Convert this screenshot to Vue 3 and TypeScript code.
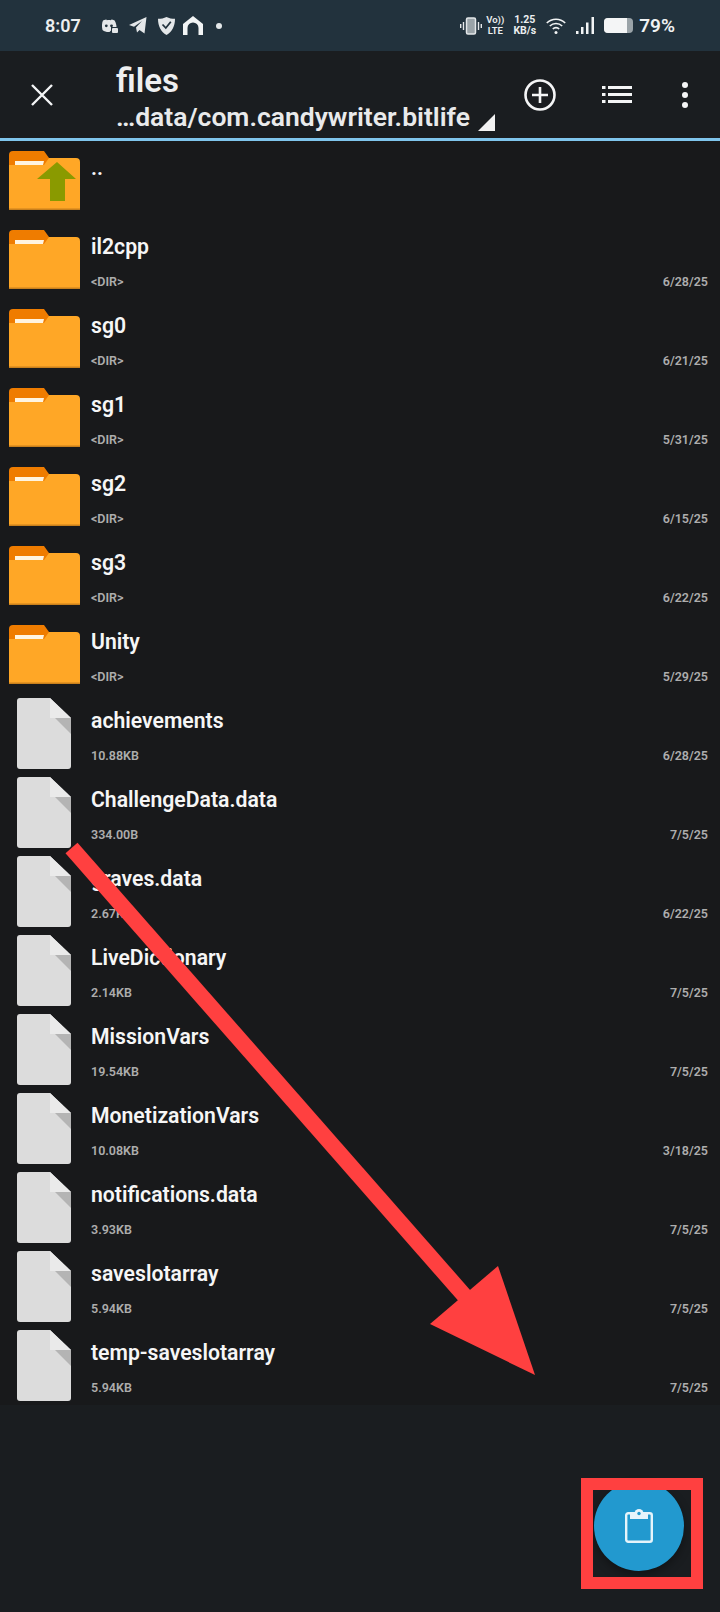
<script setup lang="ts">
interface Entry {
  name: string
  sub?: string
  date?: string
  kind: 'up' | 'dir' | 'file'
}

const dirs: [string, string][] = [
  ['il2cpp', '6/28/25'],
  ['sg0', '6/21/25'],
  ['sg1', '5/31/25'],
  ['sg2', '6/15/25'],
  ['sg3', '6/22/25'],
  ['Unity', '5/29/25'],
]

const files: [string, string, string][] = [
  ['achievements', '10.88KB', '6/28/25'],
  ['ChallengeData.data', '334.00B', '7/5/25'],
  ['graves.data', '2.67KB', '6/22/25'],
  ['LiveDictionary', '2.14KB', '7/5/25'],
  ['MissionVars', '19.54KB', '7/5/25'],
  ['MonetizationVars', '10.08KB', '3/18/25'],
  ['notifications.data', '3.93KB', '7/5/25'],
  ['saveslotarray', '5.94KB', '7/5/25'],
  ['temp-saveslotarray', '5.94KB', '7/5/25'],
]

const entries: Entry[] = [
  { name: '..', kind: 'up' },
  ...dirs.map(([name, date]): Entry => ({ name, sub: '<DIR>', date, kind: 'dir' })),
  ...files.map(([name, sub, date]): Entry => ({ name, sub, date, kind: 'file' })),
]
</script>

<template>
  <div class="screen">
    <header class="status">
      <span class="time">8:07</span>
      <svg class="st-icon discord" viewBox="0 0 18 14" width="18" height="14">
        <path fill="#e4e7e9" d="M3 1.5C5 .5 6 .4 6.4.4l.4.8c1.4-.2 2.8-.2 4.2 0l.4-.8c.9.1 2 .5 3.2 1.100C16 4 16.600 6.500 16.500 8h-5.500v3.500L9.500 13c-2.500.2-5-.3-7-2C1.700 8 1.800 4 3 1.500Z" />
        <circle cx="6.300" cy="6.800" r="1.400" fill="#22323d" />
        <circle cx="11.500" cy="6.800" r="1.400" fill="#22323d" />
        <rect x="12" y="9" width="6" height="5" rx="1" fill="#e4e7e9" />
      </svg>
      <svg class="st-icon telegram" viewBox="0 0 18 17" width="18" height="17">
        <path fill="#e4e7e9" d="M0 8 17.500 0 15.500 16.500 10.500 13 8 15.500 7 10.500 13 4 5 9.800Z" />
      </svg>
      <svg class="st-icon shield" viewBox="0 0 17 18" width="17" height="18">
        <path fill="#e4e7e9" d="M8.500 0C11 1.300 14 1.800 17 1.800 17 9 14 15 8.500 18 3 15 0 9 0 1.800 3 1.800 6 1.300 8.500 0Z" />
        <path fill="none" stroke="#22323d" stroke-width="1.800" d="M4.500 7.500 7.800 11 12.800 4.800" />
      </svg>
      <svg class="st-icon home" viewBox="0 0 20 19" width="20" height="19">
        <path fill="#f2f4f5" d="M10 0 20 8v11h-4.500v-7a5.500 5.500 0 0 0-11 0v7H0V8Z" />
      </svg>
      <span class="dot" />
      <span class="spacer" />
      <svg class="st-icon vibrate" viewBox="0 0 22 18" width="22" height="18">
        <rect x="6.500" y="1" width="9" height="16" rx="1.500" fill="#9aa3a8" stroke="#e4e7e9" stroke-width="1.500" />
        <path stroke="#e4e7e9" stroke-width="1.400" d="M3.500 5v8M.7 7v4M18.500 5v8M21.300 7v4" />
      </svg>
      <div class="volte"><span>Vo))</span><span>LTE</span></div>
      <div class="speed"><span>1.25</span><span>KB/s</span></div>
      <svg class="st-icon wifi" viewBox="0 0 20 16" width="20" height="16">
        <g fill="none" stroke="#f2f4f5" stroke-width="1.600">
          <path d="M.8 5a13 13 0 0 1 18.400 0" />
          <path d="M3.800 8a9 9 0 0 1 12.400 0" />
          <path d="M6.800 11a4.500 4.500 0 0 1 6.400 0" />
        </g>
        <circle cx="10" cy="14.500" r="1.500" fill="#f2f4f5" />
      </svg>
      <svg class="st-icon signal" viewBox="0 0 18 17" width="18" height="17">
        <path fill="#f2f4f5" d="M0 14h2.500v3H0ZM5 10h2.500v7H5ZM10 5.500h2.500V17H10ZM15.500 0H18v17h-2.500Z" />
      </svg>
      <div class="battery"><span class="level" /></div>
      <span class="pct">79%</span>
    </header>

    <div class="toolbar">
      <svg class="close" viewBox="0 0 24 24" width="24" height="24">
        <path stroke="#f4f5f6" stroke-width="2.400" d="M2 2l20 20M22 2 2 22" />
      </svg>
      <div class="titles">
        <div class="title">files</div>
        <div class="path-row">
          <span class="path">…data/com.candywriter.bitlife</span>
          <span class="corner" />
        </div>
      </div>
      <svg class="add" viewBox="0 0 32 32" width="32" height="32">
        <circle cx="16" cy="16" r="14.500" fill="none" stroke="#f4f5f6" stroke-width="2.600" />
        <path stroke="#f4f5f6" stroke-width="2.600" d="M16 8v16M8 16h16" />
      </svg>
      <svg class="view" viewBox="0 0 30 17" width="30" height="17">
        <path fill="#f4f5f6" d="M0 0h3.500v3H0ZM0 7h3.500v3H0ZM0 14h3.500v3H0ZM6 0h24v3H6ZM6 7h24v3H6ZM6 14h24v3H6Z" />
      </svg>
      <div class="more"><span /><span /><span /></div>
    </div>

    <main class="list">
      <div v-for="item in entries" :key="item.name" class="row">
        <div class="thumb">
          <svg v-if="item.kind !== 'file'" class="folder" viewBox="0 0 71 59" width="71" height="59">
            <path fill="#ef7c00" d="M0 4a4 4 0 0 1 4-4h31l5 7v10H0Z" />
            <path fill="#fff4e0" d="M6 10h29l-1 4H6Z" />
            <path fill="#ffa726" d="M0 14h35l5-7h27a4 4 0 0 1 4 4v48H0Z" />
            <path fill="#c9801c" d="M0 57.500h71V59H0Z" />
            <path v-if="item.kind === 'up'" fill="#8a9a00" d="M48 11 67 28H56v22H41V28H28Z" />
          </svg>
          <svg v-else class="doc" viewBox="0 0 54 71" width="54" height="71">
            <path fill="#dcdcdc" d="M3 0h30l21 20v48a3 3 0 0 1-3 3H3a3 3 0 0 1-3-3V3a3 3 0 0 1 3-3Z" />
            <path fill="#eaeaea" d="M33 0 54 20H33Z" />
            <path fill="#b4b4b4" d="M38 20h16v16Z" />
          </svg>
        </div>
        <div class="info">
          <div class="name">{{ item.name }}</div>
          <div v-if="item.sub" class="meta">
            <span>{{ item.sub }}</span>
            <span>{{ item.date }}</span>
          </div>
        </div>
      </div>
    </main>

    <button class="fab" type="button">
      <svg viewBox="0 0 28 34" width="28" height="34">
        <rect x="1.200" y="4.200" width="25.600" height="28.600" rx="2" fill="none" stroke="#e6f4fb" stroke-width="2.400" />
        <path fill="#e6f4fb" d="M5 3h18v7H5Z" />
        <circle cx="14" cy="4.500" r="4.500" fill="#e6f4fb" />
        <circle cx="14" cy="4.500" r="1.700" fill="#2299cf" />
      </svg>
    </button>

    <!-- red markup drawn over the screenshot -->
    <svg class="markup" viewBox="0 0 720 1612" width="720" height="1612">
      <path fill="none" stroke="#ff4040" stroke-width="16" d="M71.500 848 470 1302" />
      <path fill="#ff4040" d="M498 1266 430 1324 535 1375Z" />
      <rect x="587" y="1484" width="110" height="99" fill="none" stroke="#ff4040" stroke-width="12" />
    </svg>
  </div>
</template>

<style scoped>
.screen {
  position: relative;
  width: 720px;
  height: 1612px;
  overflow: hidden;
  background: #1a1d20;
  color: #f4f5f6;
  font-family: Roboto, "Liberation Sans", sans-serif;
}

.status {
  display: flex;
  align-items: center;
  height: 51px;
  padding: 0 45px;
  box-sizing: border-box;
  background: #22323d;
}

.time {
  width: 38px;
  font-size: 18px;
  font-weight: 600;
  color: #eceeef;
  margin-right: 17px;
  white-space: nowrap;
}

.st-icon {
  flex: none;
}

.telegram,
.shield {
  margin-left: 11px;
}

.home {
  margin-left: 8px;
}

.dot {
  width: 6px;
  height: 6px;
  margin-left: 13px;
  border-radius: 50%;
  background: #e4e7e9;
}

.spacer {
  flex: 1;
}

.vibrate {
  margin-right: 5px;
}

.volte,
.speed {
  display: flex;
  flex-direction: column;
  align-items: center;
  font-weight: 700;
  color: #eceeef;
  line-height: 10.500px;
}

.volte {
  width: 16px;
  font-size: 9.500px;
  font-weight: 600;
  margin-right: 9px;
  white-space: nowrap;
}

.speed {
  width: 25px;
  font-size: 10.500px;
  margin-right: 9px;
  white-space: nowrap;
}

.wifi,
.signal {
  margin-right: 10px;
}

.battery {
  width: 29px;
  height: 15px;
  border-radius: 4px;
  overflow: hidden;
  background: #9aa3a8;
  margin-right: 6px;
}

.level {
  display: block;
  width: 79%;
  height: 100%;
  background: #f4f5f6;
}

.pct {
  font-size: 19px;
  font-weight: 600;
  color: #f0f2f3;
  white-space: nowrap;
}

.toolbar {
  display: flex;
  align-items: center;
  height: 87px;
  box-sizing: border-box;
  padding-left: 30px;
  background: #1a1d20;
}

.close {
  flex: none;
  margin-right: 62px;
}

.titles {
  flex: none;
  width: 410px;
  padding-top: 5px;
}

.title {
  font-size: 33px;
  line-height: 36px;
  font-weight: 600;
  color: #eeeff0;
}

.path-row {
  display: flex;
  align-items: flex-end;
  margin-top: 3px;
}

.path {
  font-size: 26.500px;
  line-height: 30px;
  font-weight: 600;
  color: #e9eaeb;
  white-space: nowrap;
}

.corner {
  width: 0;
  height: 0;
  margin: 0 0 1px 8px;
  border-left: 17px solid transparent;
  border-bottom: 17px solid #f2f2f2;
}

.add {
  flex: none;
  margin-left: -2px;
  margin-right: 46px;
}

.view {
  flex: none;
  margin-right: 50px;
}

.more {
  display: flex;
  flex-direction: column;
  gap: 4px;
}

.more span {
  width: 6px;
  height: 6px;
  border-radius: 50%;
  background: #f4f5f6;
}

.list {
  border-top: 3px solid #7fc5ec;
  background: #18191b;
}

.row {
  display: flex;
  height: 79px;
  box-sizing: border-box;
}

.thumb {
  flex: none;
  width: 91px;
}

.folder {
  display: block;
  margin: 10px 0 0 9px;
}

.doc {
  display: block;
  margin: 4px 0 0 17px;
}

.info {
  flex: 1;
  padding-right: 12px;
  min-width: 0;
}

.name {
  margin-top: 13px;
  font-size: 21.200px;
  line-height: 28px;
  font-weight: 600;
  color: #f6f6f6;
}

.meta {
  display: flex;
  justify-content: space-between;
  margin-top: 13px;
  font-size: 12.500px;
  line-height: 16px;
  font-weight: 600;
  color: #adadad;
}

.fab {
  position: absolute;
  left: 594px;
  top: 1481px;
  display: flex;
  align-items: center;
  justify-content: center;
  width: 90px;
  height: 90px;
  padding: 0;
  border: 0;
  border-radius: 50%;
  background: #2299cf;
  box-shadow: 0 4px 10px rgba(0, 0, 0, 0.35);
}

.markup {
  position: absolute;
  left: 0;
  top: 0;
  pointer-events: none;
}
</style>
